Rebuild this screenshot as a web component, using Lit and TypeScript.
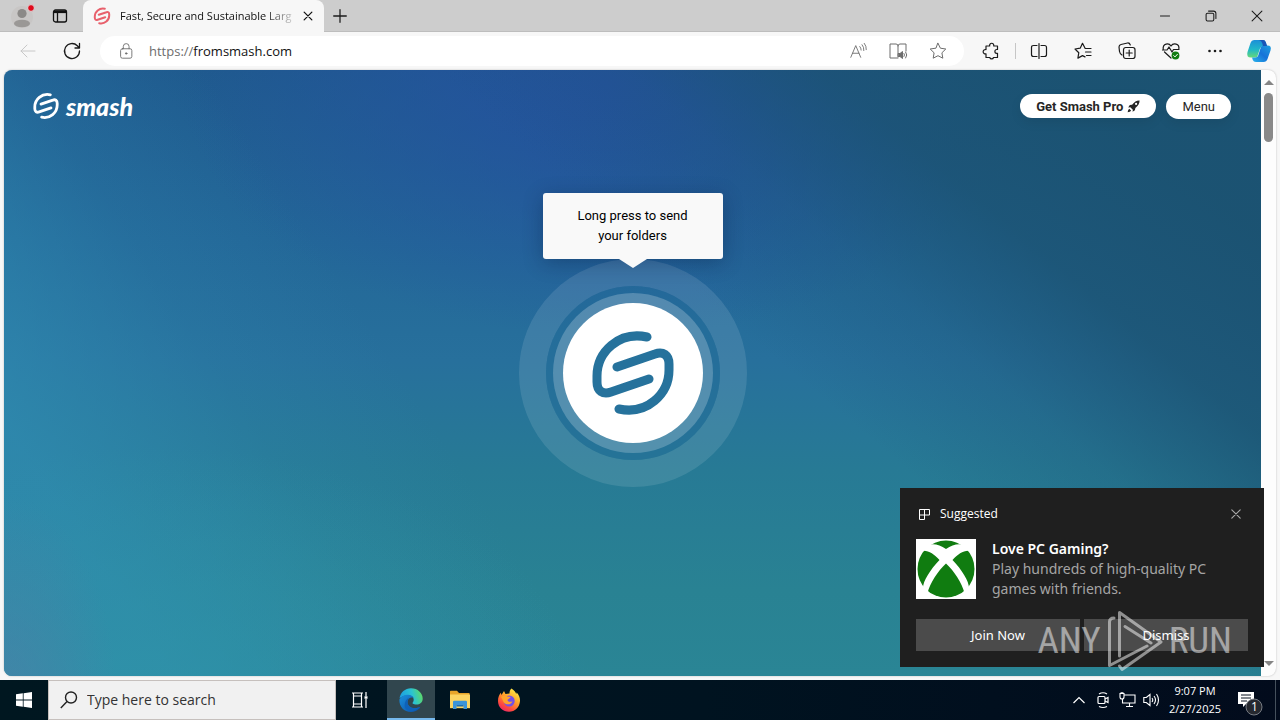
import { LitElement, html, css, svg } from "lit";
import { customElement } from "lit/decorators.js";

const smashMark = (width: number) => svg`
  <g fill="none" stroke="currentColor" stroke-width=${width} stroke-linecap="round" stroke-linejoin="round">
    <path d="M59 9C31 3 9 24 9 48V54C9 63 15 67 23 64L61 51"/>
    <path d="M31 81C59 87 81 66 81 42V36C81 27 75 23 67 26L29 39"/>
  </g>`;

const line = (size: number, body: unknown) => html`
  <svg width=${size} height=${size} viewBox="0 0 20 20" fill="none" stroke="currentColor"
    stroke-linecap="round" stroke-linejoin="round" aria-hidden="true">${body}</svg>`;

const shared = css`
  * { box-sizing: border-box; }
  button, input { font: inherit; color: inherit; border: 0; margin: 0; padding: 0; background: none; outline: none; }
  button { display: flex; align-items: center; justify-content: center; flex: none; }
  svg { display: block; flex: none; }
  a { color: inherit; text-decoration: none; }
`;

@customElement("browser-chrome")
class BrowserChrome extends LitElement {
  static styles = [shared, css`
    :host { display: block; color: #1b1b1b; font-family: "Open Sans", "Noto Sans", sans-serif; }
    .tabs { display: flex; height: 32px; background: #cdcdcd; border-bottom: 1px solid #bdbdbd; }
    .profile { width: 44px; }
    .tools { width: 32px; margin-right: 7px; }
    .tab { display: flex; align-items: center; width: 241px; height: 32px; padding-left: 10px; background: #f7f7f7; border-radius: 8px 8px 0 0; color: #e8606c; }
    .title { flex: 1; margin-left: 9px; white-space: nowrap; font-size: 11px; line-height: 16px; color: #111;
      -webkit-mask-image: linear-gradient(90deg, #000 84%, rgba(0,0,0,.2)); mask-image: linear-gradient(90deg, #000 84%, rgba(0,0,0,.2)); }
    .close { width: 32px; height: 32px; color: #111; }
    .add { width: 32px; }
    .space { flex: 1; }
    .window { width: 46px; }
    .bar { display: flex; align-items: center; height: 38px; padding-left: 6px; background: #f7f7f7; }
    .tool { width: 44px; height: 30px; }
    .faded { color: #c8c8c8; }
    .address { display: flex; align-items: center; flex: 1; min-width: 0; height: 30px; margin: 0 5px 0 6px; padding: 0 6px 0 17px; border-radius: 15px; background: #fff; color: #6d6d6d; }
    .scheme { margin-left: 14px; font-size: 13px; line-height: 20px; }
    .url { flex: 1; min-width: 0; font-size: 13px; line-height: 20px; color: #111; }
    .inner { width: 40px; height: 30px; }
    .rule { width: 1px; height: 16px; margin: 0 1px 0 2px; background: #c6c6c6; }
    .copilot { width: 43px; height: 30px; }
  `];

  render() {
    return html`
      <div class="tabs">
        <button class="profile" aria-label="Profile">
          <svg width="28" height="28" viewBox="0 0 28 28">
            <circle cx="14" cy="15" r="11" fill="#c8c6c5"/>
            <circle cx="14" cy="11.500" r="4.600" fill="#8b8987"/><ellipse cx="14" cy="21.500" rx="8" ry="3.800" fill="#9a9896"/>
            <circle cx="23" cy="6" r="3.400" fill="#e00b1c" stroke="#dcdcdc"/>
          </svg>
        </button>
        <button class="tools" aria-label="Tab actions">
          <svg width="16" height="16" viewBox="0 0 16 16" fill="none" stroke="#111" stroke-width="1.300">
            <rect x="1.500" y="2" width="13" height="12" rx="2"/><path d="M2 3.800h12" stroke-width="2.600"/><path d="M5.500 4v10"/>
          </svg>
        </button>
        <div class="tab">
          <svg width="18" height="18" viewBox="0 0 90 90">${smashMark(10)}</svg>
          <span class="title">Fast, Secure and Sustainable Larg</span>
          <button class="close" aria-label="Close tab">${line(14, svg`<path d="M4.500 4.500l11 11M15.500 4.500l-11 11" stroke-width="1.800"/>`)}</button>
        </div>
        <button class="add" aria-label="New tab">${line(18, svg`<path d="M10 3v14M3 10h14" stroke-width="1.400"/>`)}</button>
        <span class="space"></span>
        <button class="window" aria-label="Minimize">${line(14, svg`<path d="M3.500 10h13" stroke-width="1.400"/>`)}</button>
        <button class="window" aria-label="Restore">${line(14, svg`<rect x="3" y="6" width="11" height="11" rx="2" stroke-width="1.500"/><path d="M6.500 3h7q3.500 0 3.500 3.500V13.500" stroke-width="1.500"/>`)}</button>
        <button class="window" aria-label="Close">${line(14, svg`<path d="M3 3l14 14M17 3L3 17" stroke-width="1.500"/>`)}</button>
      </div>
      <div class="bar">
        <button class="tool faded" aria-label="Back">${line(20, svg`<path d="M17 10H3M9 4l-6 6 6 6"/>`)}</button>
        <button class="tool" aria-label="Refresh">${line(20, svg`<path d="M17.500 10a7.500 7.500 0 1 1-2.200-5.300L17.500 7M17.500 2.500V7H13" stroke-width="1.300"/>`)}</button>
        <div class="address">
          ${line(18, svg`<rect x="4" y="7.500" width="12.500" height="10.500" rx="2"/><path d="M7 7.500V5a3.200 3.200 0 0 1 6.400 0v2.500"/><circle cx="10.200" cy="12.700" r=".8" fill="currentColor"/>`)}
          <label class="scheme" for="url">https://</label>
          <input class="url" id="url" value="fromsmash.com">
          <button class="inner" aria-label="Read aloud">${line(18, svg`<path d="M2 17L7.500 4 13 17M4 12.500h7M12 5q1.500 1.500 1.500 4M14.500 3q2.300 2.500 2 6.500M17 1.500q2.500 3 2.200 7"/>`)}</button>
          <button class="inner" aria-label="Immersive reader">${line(20, svg`<path d="M10 17H2V3h6q2 0 2 2v11M10 5q0-2 2-2h6v7"/><path d="M10.500 12.500h1.500l2.500-2v7l-2.500-2h-1.500z" fill="currentColor"/><path d="M16 12.500q1.200 1.500 0 3M17.700 11q2.300 3 0 6"/>`)}</button>
          <button class="inner" aria-label="Add to favorites">${line(20, svg`<path d="M10 2.300l2.400 4.900 5.400.8-3.900 3.800.9 5.400-4.800-2.500-4.800 2.500.9-5.400L2.200 8l5.400-.8z"/>`)}</button>
        </div>
        <button class="tool" aria-label="Extensions">${line(20, svg`<path d="M5 5h3.700a2.100 2.100 0 1 1 4 0h3.800v3.500h-.7a1.900 1.900 0 0 0 0 3.800h.7V16.500h-4a1.900 1.900 0 0 1-3.700 0H5v-3.700a2.200 2.200 0 1 1 0-4.200z" stroke-width="1.200"/>`)}</button>
        <span class="rule"></span>
        <button class="tool" aria-label="Split screen">${line(20, svg`<path d="M8 4.500H4.500q-2 0-2 2v7q0 2 2 2H8M12 4.500h3.500q2 0 2 2v7q0 2-2 2H12M10 2.500v15" stroke-width="1.200"/>`)}</button>
        <button class="tool" aria-label="Favorites">${line(20, svg`<path d="M18 7.500h-5.800L9.500 2.300 7.200 7.200 2 8l3.800 3.700-.9 5.400 4.600-2.500 2.500 1.300M12.500 11H18M13.500 14.500H18" stroke-width="1.200"/>`)}</button>
        <button class="tool" aria-label="Collections">${line(20, svg`<path d="M5 14Q2.800 12.500 2.500 10.500L2 6q0-2 2-2.500L10.500 2q2-.3 2.800 2" stroke-width="1.200"/><rect x="6.500" y="6.500" width="11.500" height="11" rx="2.200" stroke-width="1.200"/><path d="M12.200 9v6M9.200 12h6" stroke-width="1.200"/>`)}</button>
        <button class="tool" aria-label="Browser essentials">${line(20, svg`<path d="M10 17L3.500 11M2.200 8.500C1.500 2 8 1.800 10 5c2-3.200 9-3 7.800 3.500M1.500 9H6l2-3 3 5 1.500-2.500h5.500" stroke-width="1.200"/><circle cx="14.500" cy="14.500" r="3.900" fill="#107c10" stroke="none"/><path d="M12.700 14.600l1.300 1.300 2.400-2.600" stroke="#fff"/>`)}</button>
        <button class="tool" aria-label="Settings and more">${line(20, svg`<g fill="currentColor" stroke="none"><circle cx="4.500" cy="10" r="1.300"/><circle cx="10" cy="10" r="1.300"/><circle cx="15.500" cy="10" r="1.300"/></g>`)}</button>
        <button class="copilot" aria-label="Copilot">
          <svg width="26" height="26" viewBox="0 0 26 26">
            <defs>
              <linearGradient id="ca" x1="0" y1="0" x2="0" y2="1"><stop offset="0" stop-color="#1b8fd8"/><stop offset=".55" stop-color="#20b8c8"/><stop offset="1" stop-color="#66d878"/></linearGradient>
              <linearGradient id="cb" x1="1" y1="0" x2="0" y2="1"><stop offset="0" stop-color="#1f9fe0"/><stop offset=".5" stop-color="#1673d8"/><stop offset="1" stop-color="#2ab4ec"/></linearGradient>
            </defs>
            <path d="M8.500 2H17q2 0 2.800 2.200L21 8h-3.500q-2.700 0-3.500 2.500L11.500 18Q11 19.500 9.500 19.500H5Q0 19.500 1.500 14L4.500 5Q5.500 2 8.500 2z" fill="url(#ca)"/>
            <path d="M17.500 24H10q-2.500 0-3.200-2L6 19.500h3.500q2 0 2.700-2L14.800 9.500Q15.500 7.500 17 7.500h4.500q4.500 0 3 5L21.500 21q-1 3-4 3z" fill="url(#cb)"/>
            <path d="M12.500 2H17q2 0 2.800 2.200L21 8h-4q-1-6-4.500-6z" fill="#1b55b8"/>
          </svg>
        </button>
      </div>`;
  }
}

@customElement("smash-page")
class SmashPage extends LitElement {
  static styles = [shared, css`
    :host { display: flex; min-height: 0; border-radius: 8px; overflow: hidden; background: #fdfdfd; box-shadow: 0 0 2px #b8b8b8; font-family: Roboto, sans-serif; }
    .hero { display: grid; flex: 1; min-width: 0; background:
      radial-gradient(ellipse 9% 34% at 0% 104%, rgba(80,126,166,.6), rgba(80,126,166,0)),
      radial-gradient(ellipse 34% 42% at 12% 104%, rgba(46,150,166,.6), rgba(46,150,166,0)),
      linear-gradient(237deg, rgba(48,140,178,0) 64%, rgba(48,140,178,.2) 75%, rgba(48,140,178,.75) 90%),
      linear-gradient(40deg, rgba(27,82,113,0) 58%, rgba(27,82,113,.28) 68%, rgba(27,82,113,.8) 78%, rgba(27,82,113,.97) 90%),
      radial-gradient(ellipse 34% 42% at 48% 2%, #24529f, rgba(36,82,159,0)),
      linear-gradient(180deg, #1f5a8e 0%, #236798 28%, #27709c 48%, #277a95 66%, #298293 86%, #2a8595 100%); }
    .header { grid-area: 1 / 1; align-self: start; z-index: 1; display: flex; align-items: flex-start; gap: 10px; padding: 24px 30px 0 28px; }
    .brand { display: flex; align-items: center; gap: 6px; height: 24px; margin-right: auto; color: #fff; font: italic 900 25px/22px Lato, sans-serif; }
    .pill { height: 25px; padding: 0 16px; border-radius: 13px; background: #fff; color: #262626; font-size: 13px; box-shadow: 0 4px 12px rgba(0,0,0,.08); }
    .pro { gap: 4px; height: 24px; font-weight: 700; }
    .stage { grid-area: 1 / 1; display: grid; place-items: center; }
    .halo { position: relative; display: grid; place-items: center; width: 228px; height: 228px; border: 27px solid rgba(255,255,255,.11); border-radius: 50%; }
    .core { display: grid; place-items: center; width: 174px; height: 174px; border-radius: 50%; background: rgba(36,108,152,.45); }
    .send { width: 140px; height: 140px; border-radius: 50%; background: #fff; color: #26729c; box-shadow: 0 0 0 10px rgba(255,255,255,.22); }
    .tip { position: absolute; left: 50%; bottom: 201px; width: 180px; margin-left: -90px; padding: 13px 30px; border-radius: 3px; background: #f9f9f9; color: #000; font-size: 13px; line-height: 20px; text-align: center; box-shadow: 0 4px 20px rgba(0,20,50,.3); }
    .tip::after { content: ""; position: absolute; left: 50%; top: 100%; margin-left: -14px; border: 14px solid transparent; border-top: 9px solid #f9f9f9; border-bottom: 0; }
    .scroll { display: flex; flex-direction: column; align-items: center; justify-content: space-between; width: 15px; padding: 10px 0; }
    .up, .down { border: 5px solid transparent; }
    .up { border-top: 0; border-bottom-color: #858585; }
    .down { border-bottom: 0; border-top-color: #858585; }
    .thumb { width: 9px; height: 49px; margin: 8px 0 auto; border-radius: 5px; background: #898989; }
  `];

  render() {
    return html`
      <div class="hero">
        <header class="header">
          <a class="brand" href="#"><svg width="28" height="28" viewBox="0 0 90 90">${smashMark(9)}</svg>smash</a>
          <button class="pill pro">Get Smash Pro
            <svg width="13" height="13" viewBox="0 0 14 14" fill="#262626">
              <path d="M13.500.5C10.500.3 8 2 5.500 5L3 5.500 1.300 8 3.500 7.700 6.300 10.500 6 12.700 8.500 11 9 8.500C12 6 13.700 3.500 13.500.5zM9.800 3a1.200 1.200 0 1 1 0 2.400 1.200 1.200 0 0 1 0-2.400z" fill-rule="evenodd"/>
              <path d="M2.500 9.500Q1 10.500.7 13.300q2.800-.3 3.800-1.800z"/>
            </svg>
          </button>
          <button class="pill">Menu</button>
        </header>
        <main class="stage">
          <div class="halo">
            <div class="core">
              <button class="send" aria-label="Select files to send"><svg width="90" height="90" viewBox="0 0 90 90">${smashMark(9)}</svg></button>
            </div>
            <div class="tip" role="tooltip">Long press to send your folders</div>
          </div>
        </main>
      </div>
      <div class="scroll"><i class="up"></i><i class="thumb"></i><i class="down"></i></div>`;
  }
}

@customElement("suggestion-toast")
class SuggestionToast extends LitElement {
  static styles = [shared, css`
    :host { display: block; padding: 16px; background: #1f1f1f; color: #fff; font-family: "Noto Sans", "Open Sans", sans-serif; }
    .top { display: flex; align-items: center; gap: 10px; height: 20px; padding-left: 2px; font: 12px/20px "Open Sans", sans-serif; }
    .close { width: 24px; height: 20px; margin-left: auto; color: #aaa; }
    .body { display: flex; gap: 16px; margin-top: 15px; }
    .copy { font-size: 14px; line-height: 20px; color: #a5a5a5; }
    .heading { margin: 0; font-size: 14px; line-height: 20px; font-weight: 600; color: #fff; }
    .text { margin: 0; }
    .actions { display: flex; gap: 4px; margin-top: 20px; }
    .action { flex: 1; height: 32px; background: #4b4b4b; font-size: 13px; }
  `];

  render() {
    return html`
      <div class="top">
        <svg width="12" height="14" viewBox="0 0 12 14" fill="none" stroke="#fff"><path d="M1.500 2.500h10v5.500h-10zM6.500 2.500v10h-5V8"/></svg>
        Suggested
        <button class="close" aria-label="Close">${line(14, svg`<path d="M4 4l12 12M16 4L4 16" stroke-width="1.600"/>`)}</button>
      </div>
      <div class="body">
        <svg width="60" height="60" viewBox="0 0 60 60">
          <rect width="60" height="60" fill="#fff"/><circle cx="30" cy="30" r="28.500" fill="#107c10"/>
          <path d="M30 10C24 6 18 4 12 6L6 12C12 11 18 15 23.500 21 14 31 7 42 7 49L11.500 54C14 44 22 32 30 24.500 38 32 46 44 48.500 54L53 49C53 42 46 31 36.500 21 42 15 48 11 54 12L48 6C42 4 36 6 30 10z" fill="#fff"/>
        </svg>
        <div class="copy">
          <h2 class="heading">Love PC Gaming?</h2>
          <p class="text">Play hundreds of high-quality PC games with friends.</p>
        </div>
      </div>
      <div class="actions"><button class="action">Join Now</button><button class="action">Dismiss</button></div>`;
  }
}

@customElement("task-bar")
class TaskBar extends LitElement {
  static styles = [shared, css`
    :host { display: flex; height: 40px; background: linear-gradient(90deg, #001720, #001320 55%, #020b1c); color: #fff; font-family: "Open Sans", "Noto Sans", sans-serif; }
    .item { width: 48px; height: 40px; }
    .search { display: flex; align-items: center; gap: 9px; width: 288px; padding-left: 11px; background: #f1f1f1; border: 1px solid #c6c0bd; color: #222; }
    .query { flex: 1; min-width: 0; font-size: 14px; line-height: 20px; }
    .query::placeholder { color: #333; opacity: 1; }
    .active { margin: 0 1px 0 3px; background: #31464e; border-bottom: 2px solid #76b9ed; padding-top: 2px; }
    .firefox { margin-left: 1px; }
    .tray { display: flex; margin-left: auto; }
    .small { width: 24px; }
    .clock { width: 64px; align-self: center; text-align: center; font-size: 11px; line-height: 18px; }
    .notes { width: 48px; padding-right: 6px; }
    .desktop { width: 5px; border-left: 1px solid #45505c; }
  `];

  render() {
    return html`
      <button class="item" aria-label="Start"><svg width="16" height="16" viewBox="0 0 16 16" fill="#fff"><path d="M0 2.200L6.800 1.300V7.600H0zM7.600 1.200L16 0V7.600H7.600zM0 8.400H6.800V14.700L0 13.800zM7.600 8.400H16V16L7.600 14.800z"/></svg></button>
      <div class="search">
        <svg width="18" height="18" viewBox="0 0 18 18" fill="none" stroke="#222" stroke-width="1.400"><circle cx="11" cy="6.500" r="5.500"/><path d="M7 10.500L.8 17"/></svg>
        <input class="query" aria-label="Search" placeholder="Type here to search">
      </div>
      <button class="item" aria-label="Task view"><svg width="18" height="16" viewBox="0 0 18 16" fill="none" stroke="#fff" stroke-width="1.200"><path d="M1 1h11M1 15h11M2.500 1v3h8V1M2.500 15v-3h8v3M2.500 4v8M10.500 4v8M15 0v4M15 7v9"/><path d="M13.500 5.500h3" stroke-width="2.500"/></svg></button>
      <button class="item active" aria-label="Microsoft Edge">
        <svg width="24" height="24" viewBox="0 0 24 24">
          <defs>
            <linearGradient id="ea" x1="0" y1=".5" x2="1" y2=".3"><stop offset="0" stop-color="#1b9de2"/><stop offset=".55" stop-color="#2bc3d2"/><stop offset="1" stop-color="#60db60"/></linearGradient>
            <linearGradient id="eb" x1="0" y1="0" x2="1" y2="1"><stop offset="0" stop-color="#1a90dc"/><stop offset="1" stop-color="#0c4fa6"/></linearGradient>
          </defs>
          <path d="M.5 10.500C1.500 4.500 6 .3 12 .3c6.800 0 11.700 5 11.700 10.200 0 4-3 6-6.200 6-3.500 0-4.600-1.300-3.600-2.300 2-2.500.5-7-5-7-4.500 0-7 2.300-8.400 3.300z" fill="url(#ea)"/>
          <path d="M.4 11.500C2 8.500 5 6.700 8.900 6.700c3 0 5.200 1.300 5.900 3.300-3-1.500-6.300.5-6.300 4 0 5 5.500 7.500 11.500 5.200.8-.3 1.300.3.800.9C18.500 23 15.300 24 12 24 5 24 0 18.500.4 11.500z" fill="url(#eb)"/>
          <path d="M8.500 14c0 5 5.500 7.500 11.500 5.200C16 24 9.500 24.500 6.500 20.500 4.500 17.500 6 11.500 10 9.500 9 10.700 8.500 12 8.500 14z" fill="#0e61b8"/>
        </svg>
      </button>
      <button class="item" aria-label="File Explorer">
        <svg width="22" height="20" viewBox="0 0 22 20"><path d="M1 1.500Q1 .8 1.700.8H8L10 3h10.500v6H1z" fill="#e8a52a"/><path d="M1 4.500h20v13.700H1z" fill="#fcd462"/><path d="M4 19v-7q0-1.200 1.200-1.200h11.600Q18 10.800 18 12v7h-3.500v-4h-7v4z" fill="#3c94d8"/><path d="M7.500 15h7v1.500h-7z" fill="#226fae"/></svg>
      </button>
      <button class="item firefox" aria-label="Firefox">
        <svg width="24" height="24" viewBox="0 0 24 24">
          <defs><linearGradient id="fa" x1=".8" y1="0" x2=".2" y2="1"><stop offset="0" stop-color="#fff04a"/><stop offset=".4" stop-color="#ffa72a"/><stop offset=".75" stop-color="#ff4b3c"/><stop offset="1" stop-color="#e5226e"/></linearGradient></defs>
          <path d="M14.500.5c3 2 4 3.500 4.700 5.500l.5-1.500C22 7 23.200 10 23 13 22.500 19.500 18 23.700 12 23.700S1 19.500 1 13c0-3.500 1-6 2.800-8.300L4.500 7 7 3l1.500 3 4-.5C12.500 3.500 13 1.500 14.500.5z" fill="url(#fa)"/>
          <circle cx="12.200" cy="13" r="5.500" fill="#7450e8"/>
          <path d="M4 9c2-2 4.500-2 6.500-.5l3 .5c0 1.500-2.500 1.700-3 3 0 1.700 2.500 2.500 5 1.200-1 3.800-7 4.300-9 .8C5.500 12 5 10 4 9z" fill="#ffa32b"/>
        </svg>
      </button>
      <div class="tray">
        <button class="small" aria-label="Show hidden icons"><svg width="12" height="8" viewBox="0 0 12 8" fill="none" stroke="#fff" stroke-width="1.200"><path d="M.5 7L6 1.500 11.500 7"/></svg></button>
        <button class="small" aria-label="Meet now"><svg width="16" height="18" viewBox="0 0 16 18" fill="none" stroke="#fff" stroke-width="1.200"><rect x="3" y="5.500" width="7" height="7" rx="1"/><path d="M10 8l3-1.500v5L10 10M4 3q4-2.500 8 0M4 15.500q4 2 8 0"/></svg></button>
        <button class="small" aria-label="Network"><svg width="17" height="16" viewBox="0 0 17 16" fill="none" stroke="#fff" stroke-width="1.100"><path d="M5.500 3H16v8H3.500V7M7 14.500h7M10.500 11v3.500M1 1.500h4V5Q5 7 3 7T1 5zM2.200 0v1.500M3.800 0v1.500"/></svg></button>
        <button class="small" aria-label="Volume"><svg width="17" height="14" viewBox="0 0 17 14" fill="none" stroke="#fff" stroke-width="1.100"><path d="M.8 4.500h2.500L7 1.500v11L3.300 9.500H.8zM9 5q1.500 2 0 4M11 3q3 4 0 8M13.500 1q4 6 0 12"/></svg></button>
        <time class="clock">9:07 PM<br>2/27/2025</time>
        <button class="notes" aria-label="Notifications, 1 new">
          <svg width="30" height="32" viewBox="0 0 30 32"><path d="M5 8h16v12h-8l-3 3v-3H5z" fill="#fff"/><path d="M8 11h10M8 14h10M8 17h6" stroke="#06101e"/><circle cx="21" cy="23" r="8" fill="#25282f" stroke="#777c84"/><text x="18" y="27" fill="#fff" font-family="Open Sans" font-size="12">1</text></svg>
        </button>
        <button class="desktop" aria-label="Show desktop"></button>
      </div>`;
  }
}

@customElement("app-root")
class AppRoot extends LitElement {
  static styles = [shared, css`
    :host { position: relative; display: flex; flex-direction: column; height: 100vh; overflow: hidden; background: #f7f7f7; }
    .page { flex: 1; margin: 0 4px 4px; }
    .toast { position: absolute; right: 16px; bottom: 53px; width: 364px; }
    .mark { position: absolute; right: 48px; bottom: 48px; display: flex; align-items: center; gap: 6px; color: rgba(255,255,255,.5); pointer-events: none; font: 400 37px/62px "Roboto Condensed", "Liberation Sans Narrow", "Open Sans Condensed", Roboto, sans-serif; }
  `];

  render() {
    return html`
      <browser-chrome></browser-chrome>
      <smash-page class="page"></smash-page>
      <task-bar></task-bar>
      <suggestion-toast class="toast"></suggestion-toast>
      <div class="mark">
        <span>ANY</span>
        <svg width="56" height="62" viewBox="0 0 56 62" fill="none" stroke="currentColor" stroke-width="3" stroke-linejoin="round" stroke-linecap="round">
          <path d="M7 8Q2.500 8 2.500 12V55.500L40 36M18 16.500L44 33 M12.500 46V2.500L54 32 15 59.500 12.500 56"/>
        </svg>
        <span>RUN</span>
      </div>`;
  }
}
